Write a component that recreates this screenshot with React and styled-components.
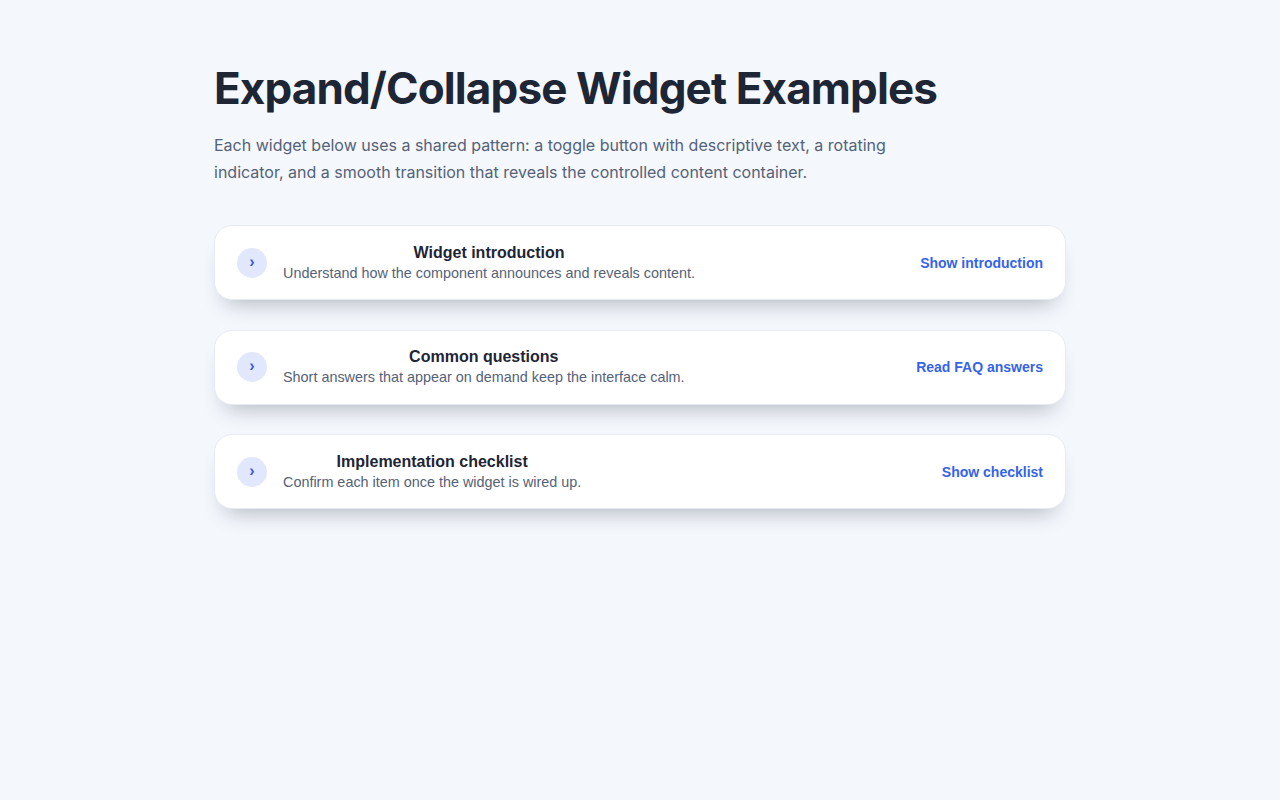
import React, { useState } from "react";
import styled, { createGlobalStyle } from "styled-components";

const GlobalStyle = createGlobalStyle`
	* {
		box-sizing: border-box;
	}
	body {
		margin: 0;
		background: #f4f7fc;
		font-family: "Inter", "Liberation Sans", sans-serif;
	}
`;

const widgets = [
	{
		id: "intro",
		title: "Widget introduction",
		description: "Understand how the component announces and reveals content.",
		action: "Show introduction",
	},
	{
		id: "faq",
		title: "Common questions",
		description: "Short answers that appear on demand keep the interface calm.",
		action: "Read FAQ answers",
	},
	{
		id: "checklist",
		title: "Implementation checklist",
		description: "Confirm each item once the widget is wired up.",
		action: "Show checklist",
	},
];

export default function App() {
	const [open, setOpen] = useState({});

	const toggle = (id) => setOpen((prev) => ({ ...prev, [id]: !prev[id] }));

	return (
		<>
			<GlobalStyle />
			<Main>
				<Title>Expand/Collapse Widget Examples</Title>
				<Intro>
					Each widget below uses a shared pattern: a toggle button with descriptive text, a rotating
					indicator, and a smooth transition that reveals the controlled content container.
				</Intro>

				<List>
					{widgets.map((w) => (
						<Card key={w.id}>
							<Toggle
								type='button'
								aria-expanded={!!open[w.id]}
								aria-controls={`${w.id}-panel`}
								onClick={() => toggle(w.id)}
							>
								<Indicator $open={!!open[w.id]}>›</Indicator>
								<Text>
									<ToggleTitle>{w.title}</ToggleTitle>
									<ToggleDesc>{w.description}</ToggleDesc>
								</Text>
								<Action>{w.action}</Action>
							</Toggle>
						</Card>
					))}
				</List>
			</Main>
		</>
	);
}

const Main = styled.main`
	width: 852px;
	margin: 0 auto;
	padding: 64px 0 60px;
`;

const Title = styled.h1`
	margin: 0;
	font-family: "Inter", sans-serif;
	font-size: 44px;
	line-height: 1.1;
	font-weight: 700;
	letter-spacing: -0.02em;
	color: #1e2535;
`;

const Intro = styled.p`
	margin: 20px 0 0;
	max-width: 720px;
	font-family: "Inter", sans-serif;
	font-size: 16px;
	line-height: 27px;
	color: #556277;
`;

const List = styled.div`
	display: flex;
	flex-direction: column;
	gap: 29.5px;
	margin-top: 39px;
`;

const Card = styled.section`
	background: #ffffff;
	border: 1px solid #e6ebf2;
	border-radius: 18px;
	box-shadow: 0 14px 22px -12px rgba(15, 23, 42, 0.32);
`;

const Toggle = styled.button`
	display: flex;
	align-items: center;
	gap: 16px;
	width: 100%;
	height: 73px;
	padding: 0 22px 0 22px;
	border: none;
	background: transparent;
	font-family: "Liberation Sans", Arial, sans-serif;
	cursor: pointer;
	text-align: center;
`;

const Indicator = styled.span`
	display: flex;
	align-items: center;
	justify-content: center;
	flex: none;
	width: 30px;
	height: 30px;
	border-radius: 50%;
	background: #e1e8fd;
	color: #3b5bdb;
	font-size: 16px;
	font-weight: 700;
	line-height: 1;
	padding-bottom: 2px;
	transform: rotate(${(p) => (p.$open ? "90deg" : "0deg")});
	transition: transform 0.2s ease;
`;

const Text = styled.span`
	display: flex;
	flex-direction: column;
	align-items: center;
`;

const ToggleTitle = styled.span`
	font-size: 16px;
	line-height: 20px;
	font-weight: 700;
	color: #1e2535;
`;

const ToggleDesc = styled.span`
	font-size: 14.4px;
	line-height: 20px;
	color: #556277;
`;

const Action = styled.span`
	margin-left: auto;
	font-size: 14px;
	font-weight: 700;
	color: #3563e9;
`;
